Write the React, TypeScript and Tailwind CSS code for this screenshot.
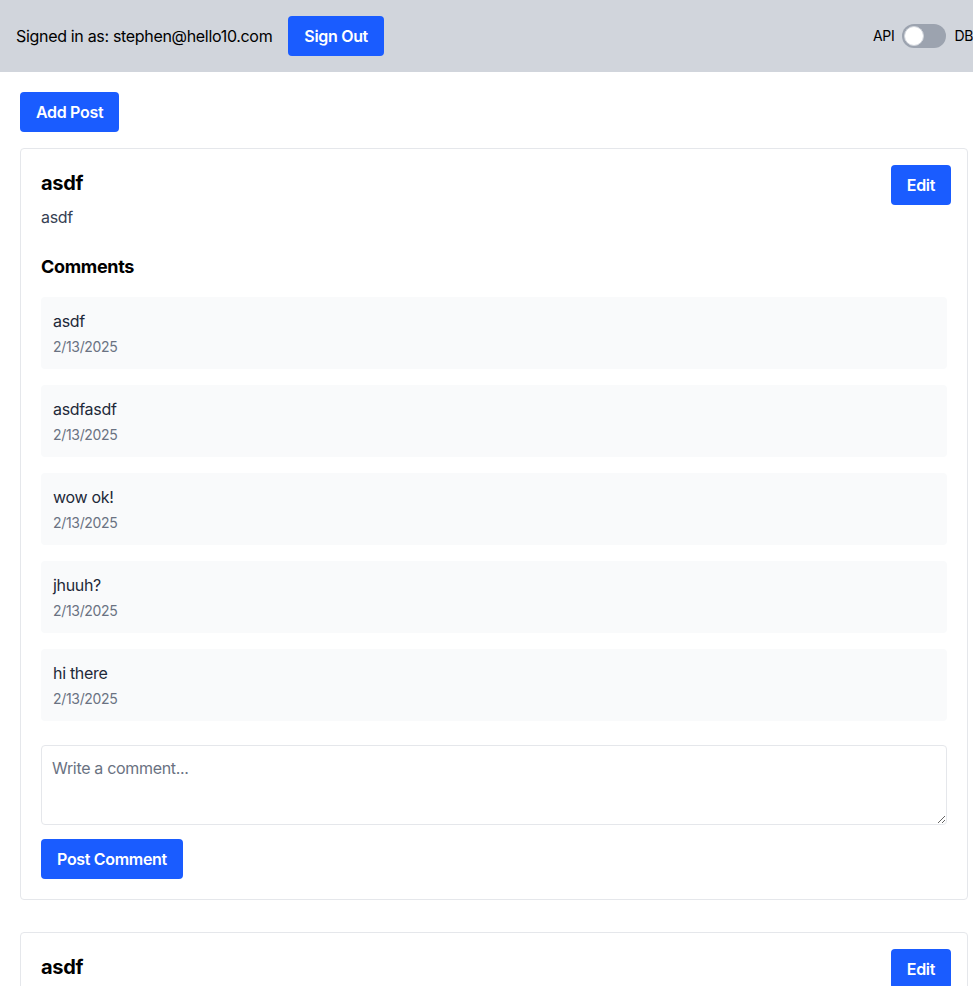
import React, { useState } from 'react'

const comments = [
  { text: 'asdf', date: '2/13/2025' },
  { text: 'asdfasdf', date: '2/13/2025' },
  { text: 'wow ok!', date: '2/13/2025' },
  { text: 'jhuuh?', date: '2/13/2025' },
  { text: 'hi there', date: '2/13/2025' },
]

const Toggle = () => {
  const [on, setOn] = useState(false)
  return (
    <div className="flex items-center gap-2 text-sm text-black">
      <span>API</span>
      <button
        onClick={() => setOn(!on)}
        className={`relative h-6 w-11 rounded-full ${on ? 'bg-[#1a5cff]' : 'bg-[#9ca3af]'}`}
      >
        <span
          className={`absolute top-[2px] h-5 w-5 rounded-full border border-gray-300 bg-white ${on ? 'left-[22px]' : 'left-[2px]'}`}
        ></span>
      </button>
      <span>DB</span>
    </div>
  )
}

const PostCard = ({ showComments }: { showComments: boolean }) => {
  return (
    <div className="mb-8 rounded border border-gray-200 bg-white p-5">
      <div className="flex items-start justify-between">
        <h2 className="text-xl font-bold text-black">asdf</h2>
        <button className="-mr-1 -mt-1 h-10 rounded bg-[#1a5cff] px-4 font-semibold text-white">
          Edit
        </button>
      </div>
      {showComments && (
        <>
          <p className="text-gray-700">asdf</p>

          <h3 className="mb-4 mt-6 text-lg font-bold text-black">Comments</h3>
          <div className="flex flex-col gap-4">
            {comments.map((c, i) => (
              <div key={i} className="rounded bg-gray-50 p-3">
                <p className="text-gray-800">{c.text}</p>
                <p className="mt-1 text-sm text-gray-500">{c.date}</p>
              </div>
            ))}
          </div>

          <textarea
            placeholder="Write a comment..."
            className="mt-6 block h-20 w-full rounded border border-gray-200 px-2.5 py-2.5 text-gray-800 placeholder:text-gray-500 focus:outline-none"
          ></textarea>
          <button className="mt-[14px] h-10 rounded bg-[#1a5cff] px-4 font-semibold text-white">
            Post Comment
          </button>
        </>
      )}
    </div>
  )
}

export default function App() {
  return (
    <div className="min-h-screen overflow-hidden bg-white font-['Inter',sans-serif] tracking-[-0.02em]">
      <header className="flex h-[72px] items-center justify-between bg-gray-300 pl-4 pr-0">
        <div className="flex items-center gap-4">
          <span className="text-black">Signed in as: stephen@hello10.com</span>
          <button className="h-10 rounded bg-[#1a5cff] px-4 font-semibold text-white">
            Sign Out
          </button>
        </div>
        <Toggle />
      </header>

      <div className="w-[968px] p-5 pr-0">
        <button className="mb-4 h-10 rounded bg-[#1a5cff] px-4 font-semibold text-white">
          Add Post
        </button>
        <PostCard showComments={true} />
        <PostCard showComments={false} />
      </div>
    </div>
  )
}
